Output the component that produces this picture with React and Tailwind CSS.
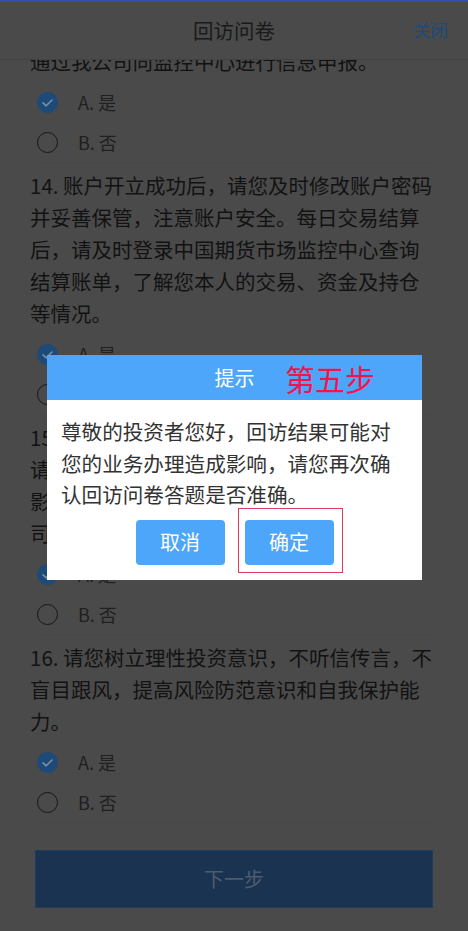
import React from 'react';

const questions = [
  {
    lines: ['通过我公司向监控中心进行信息申报。'],
    answer: 'A',
  },
  {
    lines: [
      '14. 账户开立成功后，请您及时修改账户密码',
      '并妥善保管，注意账户安全。每日交易结算',
      '后，请及时登录中国期货市场监控中心查询',
      '结算账单，了解您本人的交易、资金及持仓',
      '等情况。',
    ],
    answer: 'A',
  },
  {
    lines: [
      '15. 如您的手机号码等个人信息发生变更时，',
      '请及时通知我公司进行修改，以免因信息有',
      '影响您及时接收结算单等重要信息，否则公',
      '司不承担由此产生的相关责任。',
    ],
    answer: 'A',
  },
  {
    lines: [
      '16. 请您树立理性投资意识，不听信传言，不',
      '盲目跟风，提高风险防范意识和自我保护能',
      '力。',
    ],
    answer: 'A',
  },
];

const font = { fontFamily: '"Noto Sans CJK SC", "Noto Sans", sans-serif' };

function Radio({ checked }) {
  if (checked) {
    return (
      <svg width="21" height="21" viewBox="0 0 21 21" className="shrink-0">
        <circle cx="10.5" cy="10.5" r="10.5" fill="#1d4a78" />
        <polyline points="6,10.8 9.2,13.8 15,8" fill="none" stroke="#7d8fa3" strokeWidth="1.6" strokeLinecap="round" strokeLinejoin="round" />
      </svg>
    );
  }
  return <span className="w-[21px] h-[21px] rounded-full border-[1.5px] border-[#161616] shrink-0" />;
}

function Question({ q }) {
  return (
    <div>
      <div className="px-[30px] pt-[6px] text-[20.5px] leading-[32px] text-[#121212] whitespace-nowrap">
        {q.lines.map((l, i) => (
          <div key={i}>{l}</div>
        ))}
      </div>
      <div className="mx-[35px] mt-[5px] border-b border-[#474747]">
        {['A. 是', 'B. 否'].map((opt) => (
          <div key={opt} className="h-[40px] flex items-center pl-[2px]">
            <Radio checked={opt[0] === q.answer} />
            <span className="ml-[20px] text-[18px] text-[#202020]">{opt}</span>
          </div>
        ))}
      </div>
    </div>
  );
}

export default function App() {
  return (
    <div className="relative w-[468px] h-[931px] overflow-hidden bg-[#4a4a4a]" style={font}>
      <div className="relative z-10 h-[60px] bg-[#4a4a4a] border-t-2 border-[#3a4bb7] border-b border-b-[#424242] flex items-center justify-center">
        <span className="text-[20.5px] text-[#1a1a1a]">回访问卷</span>
        <span className="absolute right-[20px] text-[17.5px] text-[#1c4a7c]">关闭</span>
      </div>

      <div className="-mt-[21px]">
        {questions.map((q, i) => (
          <Question key={i} q={q} />
        ))}
        <div className="mx-[35px] mt-[27px] h-[58px] bg-[#1a3350] border border-[#1e3c5e] flex items-center justify-center text-[20px] text-[#4b5d6f]">
          下一步
        </div>
      </div>

      <div className="absolute left-[47px] top-[355px] w-[375px] bg-white z-20">
        <div className="relative h-[45px] bg-[#4da6f9] flex items-center justify-center">
          <span className="text-[20px] text-white">提示</span>
          <span className="absolute left-[238px] top-[5px] text-[30px] leading-[36px] text-[#f5134b]">第五步</span>
        </div>
        <div className="pl-[14px] pt-[16px] text-[20.6px] leading-[31.5px] text-[#333] whitespace-nowrap">
          <div>尊敬的投资者您好，回访结果可能对</div>
          <div>您的业务办理造成影响，请您再次确</div>
          <div>认回访问卷答题是否准确。</div>
        </div>
        <div className="flex justify-center gap-[20px] mt-[9px] pb-[15px]">
          <button className="w-[89px] h-[45px] rounded-[4px] bg-[#4da6f9] text-white text-[20px]">取消</button>
          <div className="relative">
            <button className="w-[89px] h-[45px] rounded-[4px] bg-[#4da6f9] text-white text-[20px]">确定</button>
            <span className="absolute -left-[7px] -top-[12px] w-[105px] h-[65px] border-[1.5px] border-[#e43b5d]" />
          </div>
        </div>
      </div>
    </div>
  );
}
